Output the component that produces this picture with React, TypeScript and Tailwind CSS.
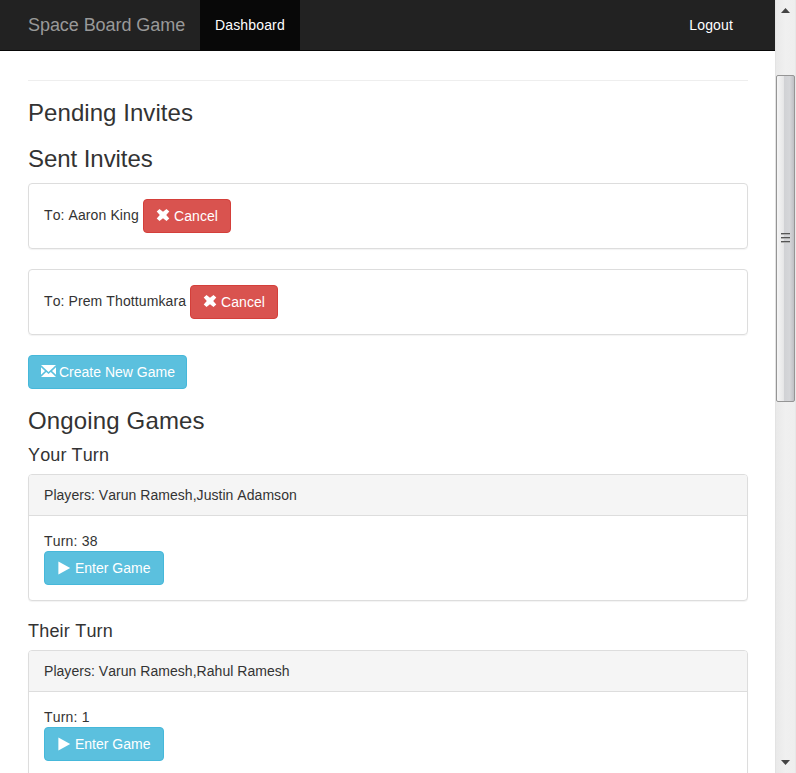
import type { ReactNode } from "react";

function RemoveIcon() {
  return (
    <svg width="14" height="14" viewBox="0 0 14 14" className="-mt-[2px] shrink-0" fill="#fff">
      <path d="M3.5 .9 L7 3.7 L10.5 .9 L13.3 3.5 L10.2 7 L13.3 10.5 L10.5 13.1 L7 10.3 L3.5 13.1 L.7 10.5 L3.8 7 L.7 3.5 Z" />
    </svg>
  );
}

function EnvelopeIcon() {
  return (
    <svg width="15" height="14" viewBox="0 0 15 14" className="-mr-px -mt-[2px] shrink-0" fill="#fff">
      <path d="M0 1 H15 L7.5 8 Z M0 3.2 L4 7 L0 10.8 Z M15 3.2 V10.8 L11 7 Z M0 12.9 L5.2 8 L7.5 10 L9.8 8 L15 12.9 Z" />
    </svg>
  );
}

function PlayIcon() {
  return (
    <svg width="14" height="14" viewBox="0 0 14 14" className="-mt-px shrink-0" fill="#fff">
      <path d="M1.4 .4 L13.2 7 L1.4 13.5 Z" />
    </svg>
  );
}

function InfoButton({ icon, width, children }: { icon: ReactNode; width: string; children: string }) {
  return (
    <button className={`flex h-[34px] items-center rounded border border-[#46b8da] bg-[#5bc0de] pl-3 text-white ${width}`}>
      {icon}
      <span className="ml-1 whitespace-nowrap">{children}</span>
    </button>
  );
}

function Invite({ name, width }: { name: string; width: string }) {
  return (
    <div className="mb-5 flex h-[66px] items-start rounded border border-[#ddd] p-[15px] shadow-[0_1px_1px_rgba(0,0,0,0.05)]">
      <span className={`mt-[6px] whitespace-nowrap tracking-[0.1px] ${width}`}>To: {name}</span>
      <button className="flex h-[34px] w-[88px] items-center rounded border border-[#d43f3a] bg-[#d9534f] pl-3 text-white">
        <RemoveIcon />
        <span className="ml-1 tracking-[0.07px]">Cancel</span>
      </button>
    </div>
  );
}

function Game({ players, turn }: { players: string; turn: number }) {
  return (
    <div className="mt-[9px] h-[127px] rounded border border-[#ddd] bg-white shadow-[0_1px_1px_rgba(0,0,0,0.05)]">
      <div className="h-[41px] rounded-t-[3px] border-b border-[#ddd] bg-[#f5f5f5] px-[15px] py-[10px] tracking-[0.04px]">Players: {players}</div>
      <div className="p-[15px]">
        <div className="tracking-[0.2px]">Turn: {turn}</div>
        <InfoButton icon={<PlayIcon />} width="w-[120px]">Enter Game</InfoButton>
      </div>
    </div>
  );
}

function Scrollbar() {
  return (
    <div className="flex h-full w-[21px] shrink-0 flex-col items-center border-x border-l-[#e3e3e3] border-r-[#e8e8e8] bg-gradient-to-r from-[#e9e9e9] via-[#f0f0f0] to-[#eeeeee]">
      <svg width="9" height="5" viewBox="0 0 9 5" className="mt-2 shrink-0">
        <path d="M4.5 0 L9 5 H0 Z" fill="#444" />
      </svg>
      <div className="mt-[62px] flex h-[327px] w-[19px] shrink-0 flex-col items-center justify-center gap-[2px] rounded-[2px] border border-[#959595] bg-[linear-gradient(90deg,#f5f5f5_0%,#e7e7e8_38%,#d1d2d5_42%,#d5d6d9_75%,#bfc0c4_100%)] pb-[2px]">
        {[0, 1, 2].map((i) => (
          <div key={i} className="h-[2px] w-[9px] border-t border-[#555] bg-[#b0b0b0]" />
        ))}
      </div>
      <svg width="9" height="5" viewBox="0 0 9 5" className="mt-auto mb-2 shrink-0">
        <path d="M0 0 H9 L4.5 5 Z" fill="#444" />
      </svg>
    </div>
  );
}

export default function App() {
  return (
    <div className="flex h-[773px] w-[796px] overflow-hidden bg-white font-['Liberation_Sans',Arial,sans-serif] text-sm leading-5 text-[#333] [font-kerning:none]">
      <div className="h-full w-[775px] shrink-0 overflow-hidden">
        <nav className="flex h-[51px] items-stretch border-b border-[#080808] bg-[#222]">
          <div className="w-[200px] whitespace-nowrap pt-[15px] pl-7 text-lg leading-5 tracking-[-0.06px] text-[#999]">Space Board Game</div>
          <div className="w-[100px] bg-[#080808] pt-[15px] pl-[15px] tracking-[0.15px] text-white">Dashboard</div>
          <div className="ml-auto mr-[42px] pt-[15px] tracking-[0.15px] text-white">Logout</div>
        </nav>
        <main className="ml-7 w-[720px]">
          <hr className="mt-[29px] border-[#eee]" />
          <h3 className="mt-[19px] text-2xl leading-[26px] tracking-[0.06px]">Pending Invites</h3>
          <h3 className="mt-5 mb-[11px] text-2xl leading-[26px] tracking-[-0.06px]">Sent Invites</h3>
          <Invite name="Aaron King" width="w-[99px]" />
          <Invite name="Prem Thottumkara" width="w-[146px]" />
          <InfoButton icon={<EnvelopeIcon />} width="w-[159px]">Create New Game</InfoButton>
          <h3 className="mt-[19px] text-2xl leading-[26px] tracking-[0.15px]">Ongoing Games</h3>
          <h4 className="mt-3 text-lg leading-[19px] tracking-[0.12px]">Your Turn</h4>
          <Game players="Varun Ramesh,Justin Adamson" turn={38} />
          <h4 className="mt-[21px] text-lg leading-[19px] tracking-[0.2px]">Their Turn</h4>
          <Game players="Varun Ramesh,Rahul Ramesh" turn={1} />
        </main>
      </div>
      <Scrollbar />
    </div>
  );
}
